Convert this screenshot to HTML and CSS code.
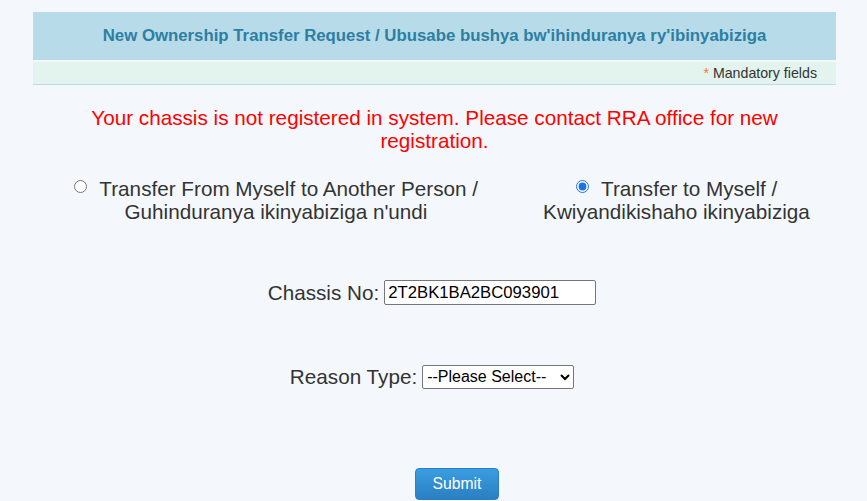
FILE: index.html
```html
<!DOCTYPE html>
<html>
<head>
<meta charset="utf-8">
<link rel="stylesheet" href="styles.css">
</head>
<body>
<div class="page">
  <div class="panel-head">New Ownership Transfer Request / Ubusabe bushya bw'ihinduranya ry'ibinyabiziga</div>
  <div class="mandatory"><span class="star">*</span> Mandatory fields</div>
  <p class="error">Your chassis is not registered in system. Please contact RRA office for new<br>registration.</p>
  <div class="choices">
    <label class="choice"><input type="radio" name="t"> Transfer From Myself to Another Person /<br>Guhinduranya ikinyabiziga n'undi</label>
    <label class="choice"><input type="radio" name="t" checked> Transfer to Myself /<br>Kwiyandikishaho ikinyabiziga</label>
  </div>
  <div class="field chassis">
    <label>Chassis No:</label><input type="text" class="text" value="2T2BK1BA2BC093901">
  </div>
  <div class="field reason">
    <label>Reason Type:</label><select class="sel"><option>--Please Select--</option></select>
  </div>
  <div class="actions">
    <button class="submit">Submit</button>
  </div>
</div>
</body>
</html>
```
FILE: styles.css
```css
html, body { margin: 0; padding: 0; }
body {
  background: #f4f8fc;
  font-family: "Liberation Sans", Arial, sans-serif;
  color: #333;
}
.page {
  margin: 12px 31px 0 33px;
}
.panel-head {
  background: #b8dbe9;
  color: #2c7fa3;
  font-weight: bold;
  font-size: 16.8px;
  height: 48px;
  line-height: 48px;
  text-align: center;
}
.mandatory {
  margin-top: 2px;
  background: #e3f4ee;
  border-bottom: 1px solid #b8dbe9;
  height: 22px;
  line-height: 22px;
  font-size: 14.2px;
  text-align: right;
  padding-right: 19px;
  color: #333;
}
.star { color: #f47a20; }
.error {
  color: #f00;
  font-size: 20.7px;
  line-height: 23px;
  text-align: center;
  margin: 21px 0 0 0;
}
.choices {
  display: grid;
  grid-template-columns: 490px 1fr;
  margin-top: 25px;
  font-size: 20.7px;
  line-height: 23px;
}
.choice {
  text-align: center;
  color: #333;
}
.choices .choice:first-child { padding-right: 4px; }
.choices .choice:last-child { padding-right: 6px; }
.choice input {
  margin: 0 7px 0 0;
  width: 13px;
  height: 13px;
  vertical-align: 3px;
  accent-color: #1a73e8;
}
.field {
  text-align: center;
  font-size: 20.7px;
  line-height: 25px;
  padding-right: 5px;
}
.chassis { margin-top: 55px; }
.field label { vertical-align: middle; margin-right: 5px; }
.text {
  box-sizing: border-box;
  width: 212px;
  height: 25px;
  padding: 1px 3px;
  font: 16.7px "Liberation Sans", Arial, sans-serif;
  border: 1px solid #767676;
  border-radius: 2px;
  vertical-align: middle;
  color: #000;
}
.reason { margin-top: 57px; }
.sel {
  box-sizing: border-box;
  font: 16px "Liberation Sans", Arial, sans-serif;
  height: 24px;
  width: 152px;
  vertical-align: middle;
  border: 1px solid #767676;
  border-radius: 2px;
  background: #fff;
  color: #000;
}
.actions {
  text-align: center;
  margin-top: 79px;
}
.submit {
  background: linear-gradient(#3a9de0, #2a7fc2);
  color: #fff;
  font: 15.7px "Liberation Sans", Arial, sans-serif;
  border: 1px solid #2a7fc2;
  border-radius: 4px;
  width: 84px;
  height: 32px;
  margin-left: 45px;
}
```
